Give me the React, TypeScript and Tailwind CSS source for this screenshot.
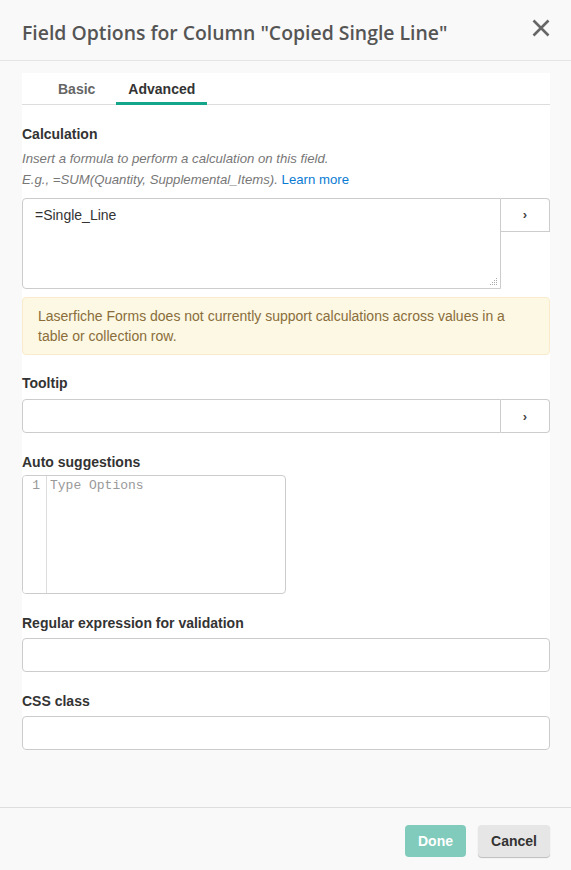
import React from "react";

const label = "text-[14px] font-bold text-[#333] leading-5";
const input = "h-[34px] border border-[#ccc] rounded-[4px] bg-white";

function ArrowButton() {
  return (
    <button className="w-[49px] h-[34px] shrink-0 border border-[#ccc] border-l-0 rounded-r-[4px] bg-white text-[13px] font-bold text-[#444] leading-none flex items-center justify-center">
      ›
    </button>
  );
}

export default function App() {
  return (
    <div className="w-[571px] h-[870px] bg-[#f9f9f9] flex flex-col font-['Liberation_Sans',Arial,sans-serif]">
      {/* header */}
      <div className="h-[61px] shrink-0 border-b border-[#e5e5e5] flex items-center justify-between pl-[22px] pr-[21px]">
        <h1 className="font-['Open_Sans',sans-serif] font-semibold text-[19.4px] text-[#555] pt-[5px]">
          Field Options for Column "Copied Single Line"
        </h1>
        <svg width="18" height="18" viewBox="0 0 18 18" className="mb-1">
          <path d="M1.5 1.5 L16.5 16.5 M16.5 1.5 L1.5 16.5" stroke="#666" strokeWidth="2.6" />
        </svg>
      </div>

      {/* body */}
      <div className="flex-1 pl-[22px] pr-[21px] pt-3">
        <div className="bg-white">
          <div className="h-[32px] border-b border-[#ddd] flex pl-[24px] gap-[9px]">
            <div className="px-3 h-[32px] flex items-center text-[14px] font-bold text-[#666]">Basic</div>
            <div className="px-3 h-[32px] flex items-center text-[14px] font-bold text-[#333] border-b-[3px] border-[#13a68a] pt-[3px] -mb-px">
              Advanced
            </div>
          </div>

          <div className={`${label} mt-[19px]`}>Calculation</div>
          <div className="mt-1 text-[13.2px] italic text-[#777] leading-[21px]">
            <div>Insert a formula to perform a calculation on this field.</div>
            <div>
              E.g., =SUM(Quantity, Supplemental_Items).{" "}
              <span className="not-italic text-[#0a7bd3]">Learn more</span>
            </div>
          </div>

          <div className="mt-2 flex">
            <div className="relative w-[479px] h-[91px] border border-[#ccc] rounded-l-[4px] bg-white pl-[12px] pt-[6px] text-[14px] text-[#333]">
              =Single_Line
              <svg width="8" height="8" viewBox="0 0 8 8" className="absolute right-[2px] bottom-[2px]">
                <g fill="#aaa">
                  <rect x="6" y="0" width="1" height="1" />
                  <rect x="4" y="2" width="1" height="1" />
                  <rect x="6" y="2" width="1" height="1" />
                  <rect x="2" y="4" width="1" height="1" />
                  <rect x="4" y="4" width="1" height="1" />
                  <rect x="6" y="4" width="1" height="1" />
                  <rect x="0" y="6" width="1" height="1" />
                  <rect x="2" y="6" width="1" height="1" />
                  <rect x="4" y="6" width="1" height="1" />
                  <rect x="6" y="6" width="1" height="1" />
                </g>
              </svg>
            </div>
            <div className="h-[34px]">
              <button className="w-[49px] h-[34px] border border-[#ccc] border-l-0 rounded-tr-[4px] bg-white text-[13px] font-bold text-[#444] flex items-center justify-center">
                ›
              </button>
            </div>
          </div>

          <div className="mt-2 h-[58px] border border-[#faebcc] bg-[#fcf8e3] rounded-[4px] pl-[15px] pr-3 py-2 text-[14px] leading-5 text-[#8a6d3b]">
            Laserfiche Forms does not currently support calculations across values in a table or collection row.
          </div>

          <div className={`${label} mt-[18px]`}>Tooltip</div>
          <div className="mt-1.5 flex">
            <div className="flex-1 h-[34px] border border-[#ccc] rounded-l-[4px] bg-white" />
            <ArrowButton />
          </div>

          <div className={`${label} mt-[19px]`}>Auto suggestions</div>
          <div className="mt-[3px] w-[264px] h-[119px] border border-[#ccc] rounded-[4px] bg-white flex overflow-hidden">
            <div className="w-[24px] border-r border-[#ddd] bg-white text-right pr-[6px] pt-[2px] font-['Liberation_Mono',monospace] text-[13px] text-[#999] leading-[16px]">
              1
            </div>
            <div className="pl-[3px] pt-[2px] font-['Liberation_Mono',monospace] text-[13px] text-[#999] leading-[16px]">
              Type Options
            </div>
          </div>

          <div className={`${label} mt-[19px]`}>Regular expression for validation</div>
          <div className={`${input} mt-[5px]`} />

          <div className={`${label} mt-[19px]`}>CSS class</div>
          <div className={`${input} mt-[5px]`} />
        </div>
      </div>

      {/* footer */}
      <div className="h-[63px] shrink-0 border-t border-[#ddd] flex justify-end items-start pt-[17px] pr-[21px] gap-3">
        <button className="w-[61px] h-[32px] rounded-[4px] bg-[#80cbbb] text-white text-[14px] font-bold">Done</button>
        <button className="w-[72px] h-[32px] rounded-[4px] bg-[#e6e6e6] text-[#333] text-[14px] font-bold shadow-[0_1px_1px_rgba(0,0,0,0.25)]">
          Cancel
        </button>
      </div>
    </div>
  );
}
